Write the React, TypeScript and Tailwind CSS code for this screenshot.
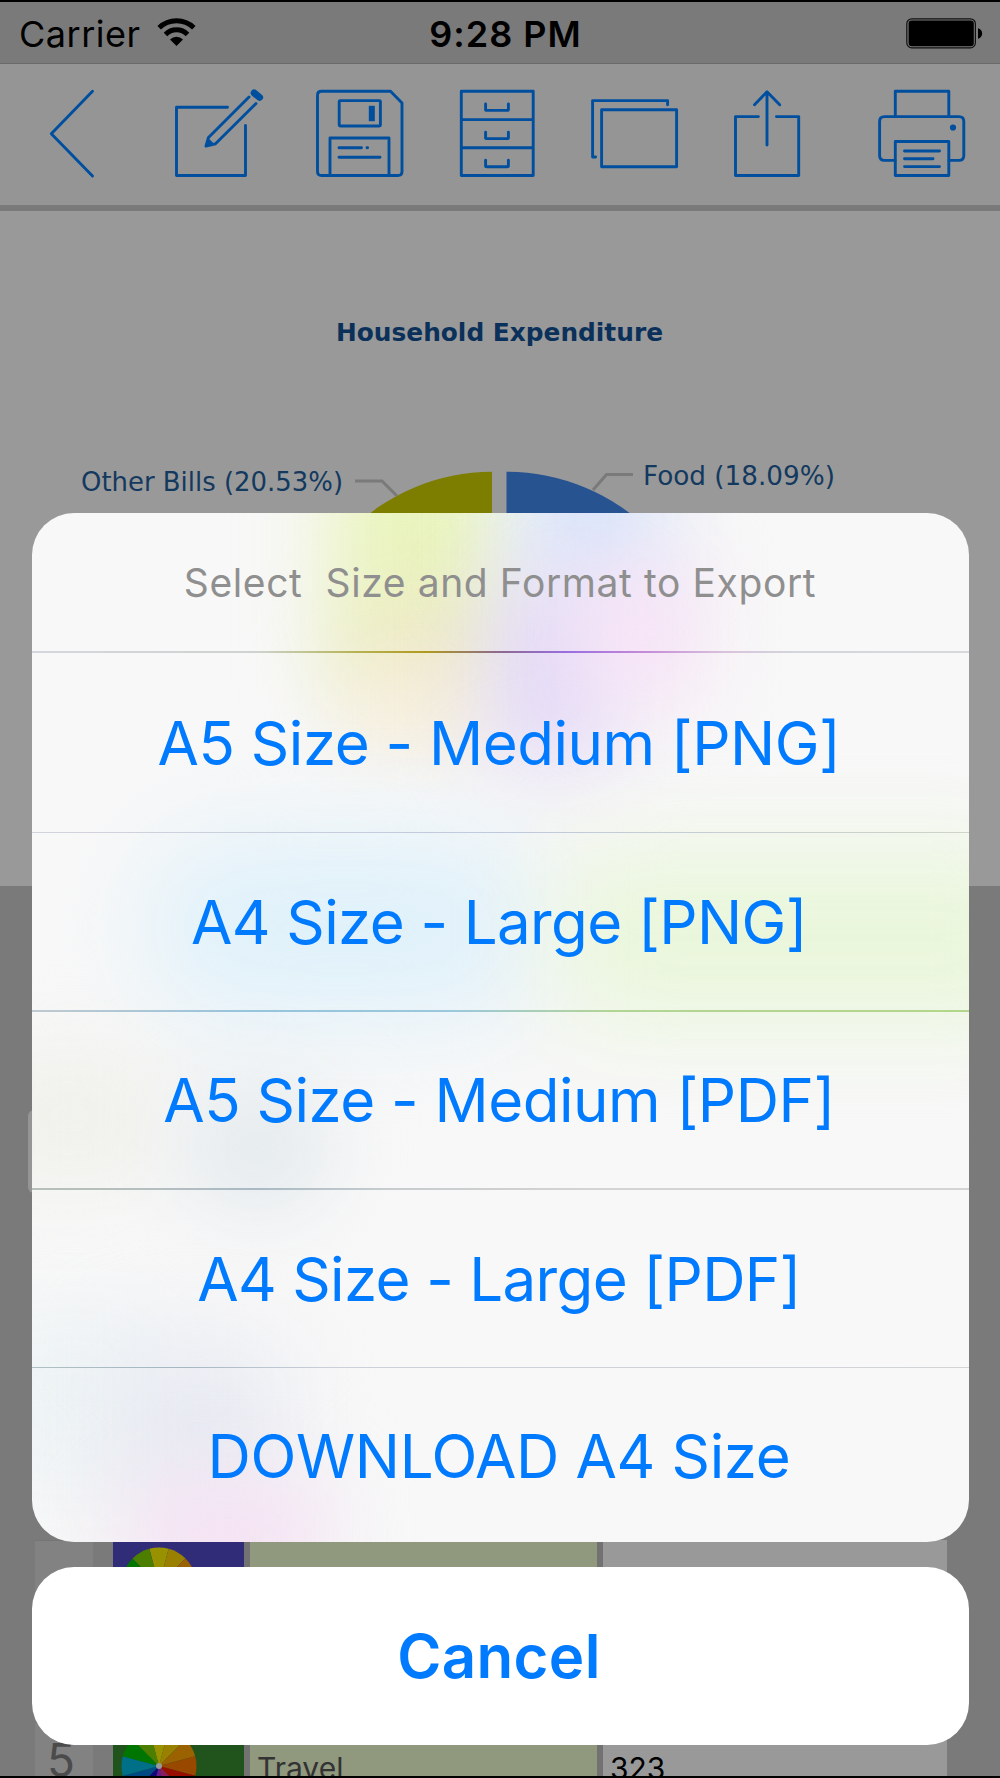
import type { ReactNode } from "react";

interface ExportOption {
  label: string;
  row: string;
  text: string;
  divider?: string;
}

const exportOptions: ExportOption[] = [
  {
    label: "A5 Size - Medium [PNG]",
    row: "h-[179px]",
    text: "tracking-[-0.5px] pr-0.5",
    divider: "h-px bg-linear-to-r from-[#d2d4dc] via-[#bfc9de] to-[#cfd4c6]",
  },
  {
    label: "A4 Size - Large [PNG]",
    row: "h-[177px]",
    text: "tracking-[-0.6px] pr-0.5",
    divider:
      "h-0.5 bg-[linear-gradient(90deg,#c0c9cf_0%,#98c4dc_22%,#9cc8dc_45%,#b4d494_62%,#b3d68a_100%)]",
  },
  {
    label: "A5 Size - Medium [PDF]",
    row: "h-[176px]",
    text: "tracking-[-0.5px] pr-0.5",
    divider:
      "h-0.5 bg-[linear-gradient(90deg,#b8c0b8_0%,#b4bec0_15%,#a9bac4_24%,#c8cccd_38%,#d3d4d3_60%,#d4d4d4_100%)]",
  },
  {
    label: "A4 Size - Large [PDF]",
    row: "h-[177px]",
    text: "tracking-[-0.65px] pr-0.5",
    divider:
      "h-px bg-[linear-gradient(90deg,#aebfc4_0%,#a6b7c4_16%,#cbd0da_32%,#d2d4d6_100%)]",
  },
  { label: "DOWNLOAD A4 Size", row: "h-[175px]", text: "tracking-[-0.35px] pr-0.5" },
];

const wheelColors = [
  "#999200", "#9a8000", "#9a6200", "#994800", "#990c00", "#8c1a5c",
  "#6a1a8a", "#10087c", "#004a84", "#007088", "#007600", "#4c7e00",
];

function ToolIcon({
  box,
  className,
  children,
}: {
  box: string;
  className: string;
  children: ReactNode;
}) {
  return (
    <svg
      viewBox={box}
      className={`shrink-0 ${className}`}
      fill="none"
      stroke="#004f9f"
      strokeWidth="2.9"
      strokeLinecap="round"
      strokeLinejoin="round"
    >
      {children}
    </svg>
  );
}

function StatusBar() {
  return (
    <div className="flex h-16 shrink-0 items-center border-t-2 border-b border-t-black border-b-[#6a6a68] bg-[#7a7a7a] pt-0.5 text-[36px] leading-none text-black">
      <div className="flex flex-1 items-center pl-[19px]">
        <span className="tracking-[0.5px]">Carrier</span>
        <svg viewBox="155 16 41 32" className="mb-[3px] ml-[15px] h-8 w-[41px]">
          <g fill="none" stroke="#000" strokeWidth="5">
            <path d="M158.2 27.8A25 25 0 0 1 192.8 27.8" />
            <path d="M164.5 34.4A15.6 15.6 0 0 1 186.5 34.4" />
          </g>
          <path d="M175.5 46L169 39.4A9.4 9.4 0 0 1 182 39.4Z" />
        </svg>
      </div>
      <span className="pl-[9px] font-semibold tracking-[1px]">9:28 PM</span>
      <div className="flex flex-1 justify-end pr-[17px] pb-px">
        <svg viewBox="905 17 78 33" className="h-[33px] w-[78px]">
          <rect x="906.8" y="18.8" width="68.6" height="29" rx="5" fill="none" stroke="#111" strokeWidth="1.2" />
          <rect x="908.6" y="20.4" width="65.2" height="25.8" rx="3.2" />
          <path d="M978 28.3C983.5 29.5 983.5 37.5 978 38.8Z" />
        </svg>
      </div>
    </div>
  );
}

function Toolbar() {
  return (
    <div className="flex h-[141px] shrink-0 items-start bg-[#959595] pt-6 pl-12">
      <ToolIcon box="48 88 48 91" className="h-[91px] w-12">
        <path d="M92.5 91.2L51.3 133.7L92.5 176" />
      </ToolIcon>
      <ToolIcon box="172 88 94 91" className="ml-[76px] h-[91px] w-[94px]">
        <path d="M227.5 107.3H176.5V175.5H245.5V125.5" />
        <path d="M249 97L208.5 137.5L206 146L215.5 143.8L256 103.5" />
        <path d="M206 146L208 138L214.5 144Z" fill="#004f9f" stroke="none" />
        <path d="M254.2 93L259.6 97.4" strokeWidth="7" strokeLinecap="round" />
      </ToolIcon>
      <ToolIcon box="313 88 94 91" className="ml-[47px] h-[91px] w-[94px]">
        <path d="M321.5 91.3H390.5L402 103V171.5Q402 175.5 398 175.5H321.5Q317.5 175.5 317.5 171.5V95.3Q317.5 91.3 321.5 91.3Z" />
        <rect x="339.2" y="100.6" width="41.2" height="25.4" rx="1" />
        <rect x="368.8" y="105.8" width="6" height="15.4" fill="#004f9f" stroke="none" />
        <path d="M330 175V138H389V175M339 147.8H361.5M367 147.8H367.6M339 157.2H380" />
      </ToolIcon>
      <ToolIcon box="457 88 80 91" className="ml-[50px] h-[91px] w-20">
        <path d="M461.3 91.3H533.2V175.5H461.3ZM461.3 119.6H533.2M461.3 147.8H533.2" />
        <path d="M485.6 104V109.7Q485.6 110.4 487 110.4H507Q508.4 110.4 508.4 109.7V104M485.6 132.2V138Q485.6 138.6 487 138.6H507Q508.4 138.6 508.4 138V132.2M485.6 160.3V166Q485.6 166.8 487 166.8H507Q508.4 166.8 508.4 166V160.3" />
      </ToolIcon>
      <ToolIcon box="588 88 94 91" className="ml-[51px] h-[91px] w-[94px]">
        <path d="M595.6 157H592.6V100.6H667.6V104.8" />
        <rect x="601.6" y="109.8" width="75" height="57" />
      </ToolIcon>
      <ToolIcon box="731 88 73 91" className="ml-[49px] h-[91px] w-[73px]">
        <path d="M758.4 116.6H735.5V175.5H798.7V116.6H776.4" />
        <path d="M767 145V92M754.5 104.7L767 91.8L779.7 104.7" />
      </ToolIcon>
      <ToolIcon box="875 88 94 91" className="ml-[71px] h-[91px] w-[94px]">
        <path d="M895.3 116V91.3H948.8V116" />
        <path d="M895 160.4H884.5Q879.6 160.4 879.6 155.5V121.5Q879.6 116.6 884.5 116.6H959Q963.8 116.6 963.8 121.5V155.5Q963.8 160.4 959 160.4H949" />
        <rect x="895.3" y="141.5" width="53.5" height="34" />
        <path d="M904.5 151H939.5M904.5 158.8H933M904.5 166.6H939.5" />
        <circle cx="953" cy="127.5" r="3.1" fill="#004f9f" stroke="none" />
      </ToolIcon>
    </div>
  );
}

function ChartPanel() {
  return (
    <div className="mt-1.5 h-[675px] shrink-0 bg-[#999]">
      <svg viewBox="0 211 1000 675" className="h-[675px] w-[1000px]" fontFamily='"DejaVu Sans", Verdana, sans-serif'>
        <path d="M492 471.8A203 206 0 0 0 289 677H492Z" fill="#7d7d00" />
        <path d="M506.5 471.8A206 206 0 0 1 712 677H506.5Z" fill="#275391" />
        <path d="M355 481H382L397 496M593 490L606.5 474.5H633" fill="none" stroke="#7a7a7a" strokeWidth="3" />
        <text x="336" y="341" fontSize="25" fontWeight="700" textLength="327" lengthAdjust="spacingAndGlyphs" fill="#0b315b">
          Household Expenditure
        </text>
        <text x="81" y="491" fontSize="26.5" textLength="262" lengthAdjust="spacingAndGlyphs" fill="#14395f">
          Other Bills (20.53%)
        </text>
        <text x="643" y="485" fontSize="26.5" textLength="192" lengthAdjust="spacingAndGlyphs" fill="#14395f">
          Food (18.09%)
        </text>
      </svg>
    </div>
  );
}

function ColorWheel() {
  const r = 37.5;
  return (
    <svg viewBox="-38 -38 76 76" className="h-[76px] w-[76px]">
      {wheelColors.map((color, i) => {
        const a = ((i * 30 - 105) * Math.PI) / 180;
        const b = ((i * 30 - 75) * Math.PI) / 180;
        const d = `M0 0L${r * Math.cos(a)} ${r * Math.sin(a)}A${r} ${r} 0 0 1 ${r * Math.cos(b)} ${r * Math.sin(b)}Z`;
        return <path key={color} d={d} fill={color} />;
      })}
      <circle r="3" fill="#999" />
    </svg>
  );
}

function TableRow({
  index,
  name,
  amount,
  iconCell,
}: {
  index?: string;
  name?: string;
  amount?: string;
  iconCell: string;
}) {
  return (
    <div className="flex h-[182px] pl-[35px] leading-none">
      <div className="w-[58px] border-t border-[#757575] bg-[#828282] pt-[14px] pl-[12px] text-[46px] text-[#4b4b4b]">
        {index}
      </div>
      <div className={`ml-5 w-[131px] pl-2 ${iconCell}`}>
        <ColorWheel />
      </div>
      <div className="w-1.5 bg-[#727273]" />
      <div className="w-[347px] bg-[#90987e] pt-[31px] pl-[7px] text-[30px] text-[#333]">{name}</div>
      <div className="w-1.5 bg-[#727273]" />
      <div className="w-[344px] bg-[#999] pt-[31px] pl-[7px] text-[30px] text-black">{amount}</div>
    </div>
  );
}

function SheetTint() {
  return (
    <div className="absolute inset-0 overflow-hidden rounded-[42px] bg-[#f8f8f8]">
      <div className="absolute -top-20 left-[300px] h-[250px] w-[165px] bg-[#e9f4bc] blur-[42px]" />
      <div className="absolute top-[90px] left-[325px] h-[110px] w-[120px] bg-[#f0e8cb] blur-[42px]" />
      <div className="absolute top-[170px] left-[320px] h-[60px] w-[120px] bg-[#f8efe0] blur-[36px]" />
      <div className="absolute -top-20 left-[490px] h-[170px] w-[140px] bg-[#d9e5fa] blur-[42px]" />
      <div className="absolute top-[70px] left-[455px] h-[180px] w-[130px] bg-[#e3d9f7] blur-[42px]" />
      <div className="absolute top-[50px] left-[550px] h-[140px] w-[120px] bg-[#f7e3f6] blur-[42px]" />
      <div className="absolute top-[320px] left-[110px] h-[190px] w-[400px] rounded-full bg-[#e0f1fa] blur-[50px]" />
      <div className="absolute top-[340px] left-[530px] h-[170px] w-[490px] bg-[#e9f6da] blur-[50px]" />
      <div className="absolute top-[540px] -left-12 h-[130px] w-[170px] bg-[#f0f1eb] blur-[40px]" />
      <div className="absolute top-[570px] left-[150px] h-[130px] w-[150px] rounded-full bg-[#e4eaed] blur-[40px]" />
      <div className="absolute top-[800px] -left-12 h-[170px] w-[180px] bg-[#eef4f5] blur-[40px]" />
      <div className="absolute top-[830px] left-[80px] h-[170px] w-[170px] bg-[#e7eaf2] blur-[48px]" />
      <div className="absolute top-[970px] left-[100px] h-[110px] w-[190px] bg-[#f5e1f3] blur-[42px]" />
    </div>
  );
}

function ExportSheet() {
  return (
    <div className="absolute inset-x-[31.5px] top-[513px] text-center leading-none text-[#007aff]">
      <div className="relative h-[1029px]">
        <SheetTint />
        <div className="relative">
          <div className="flex h-[138px] items-center justify-center text-[39px] tracking-[0.6px] whitespace-pre text-[#8f8f8f]">
            {"Select  Size and Format to Export"}
          </div>
          <div className="h-0.5 bg-[linear-gradient(90deg,#d5d7de_0%,#cdd3cf_24%,#b8b45a_34%,#b09a20_42%,#8c6a90_50%,#9a6ee0_57%,#c48ad8_65%,#d9c3dc_74%,#d3d7dc_82%,#d6d8dc_100%)]" />
          {exportOptions.map((option) => (
            <div key={option.label}>
              <button className={`flex w-full items-center justify-center text-[60px] ${option.row} ${option.text}`}>
                {option.label}
              </button>
              {option.divider ? <div className={option.divider} /> : null}
            </div>
          ))}
        </div>
      </div>
      <button className="mt-[25px] h-[178px] w-full rounded-[42px] bg-white pr-0.5 text-[60px] font-semibold tracking-[0.3px]">
        Cancel
      </button>
    </div>
  );
}

export default function App() {
  return (
    <main className="relative flex h-[1778px] w-[1000px] flex-col overflow-hidden bg-[#7a7a7a] font-['Inter',sans-serif]">
      <StatusBar />
      <Toolbar />
      <ChartPanel />
      {/* edge of the editor card behind the sheet */}
      <div className="mt-[224px] ml-7 h-[83px] w-20 shrink-0 rounded-md bg-[#959595]" />
      <div className="mt-[347px] shrink-0">
        <TableRow iconCell="bg-[#302c78] pt-[7px]" />
        <TableRow index="5" name="Travel" amount="323" iconCell="bg-[#20541c] pt-[6px]" />
      </div>
      <ExportSheet />
      <div className="absolute inset-x-0 bottom-0 h-0.5 bg-black" />
    </main>
  );
}
